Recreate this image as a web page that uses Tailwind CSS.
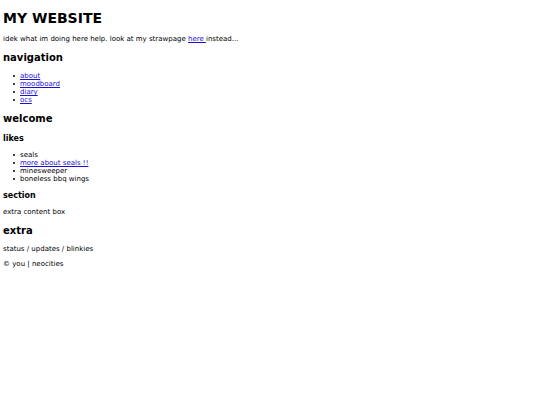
<!DOCTYPE html>
<html lang="en">
<head>
  <meta charset="UTF-8" />
  <meta name="viewport" content="width=device-width, initial-scale=1.0" />
  <title>MY WEBSITE</title>
  <script src="https://cdn.jsdelivr.net/npm/@tailwindcss/browser@4"></script>
</head>
<body class="bg-white text-black px-[3px] py-[9px] font-['DejaVu_Sans',sans-serif] text-[7px] leading-[8px]">
  <header>
    <h1 class="text-[14px] leading-[18px] font-bold">MY WEBSITE</h1>
    <p class="mt-2">idek what im doing here help. look at my strawpage <a href="#" class="text-[#1a10d8] underline">here </a>instead...</p>
  </header>

  <nav class="mt-2">
    <h2 class="text-[10px] leading-[14px] font-bold">navigation</h2>
    <ul class="mt-[7px] pl-[10px]">
      <li class="flex items-center gap-[5px] before:size-[2px] before:rounded-full before:bg-black"><a href="#" class="text-[#1a10d8] underline">about</a></li>
      <li class="flex items-center gap-[5px] before:size-[2px] before:rounded-full before:bg-black"><a href="#" class="text-[#1a10d8] underline">moodboard</a></li>
      <li class="flex items-center gap-[5px] before:size-[2px] before:rounded-full before:bg-black"><a href="#" class="text-[#1a10d8] underline">diary</a></li>
      <li class="flex items-center gap-[5px] before:size-[2px] before:rounded-full before:bg-black"><a href="#" class="text-[#1a10d8] underline">ocs</a></li>
    </ul>
  </nav>

  <main class="mt-2">
    <h2 class="text-[10px] leading-[14px] font-bold">welcome</h2>
    <section class="mt-2">
      <h3 class="text-[8px] leading-[10px] font-bold">likes</h3>
      <ul class="mt-[7px] pl-[10px]">
        <li class="flex items-center gap-[5px] before:size-[2px] before:rounded-full before:bg-black">seals</li>
        <li class="flex items-center gap-[5px] before:size-[2px] before:rounded-full before:bg-black"><a href="#" class="text-[#1a10d8] underline">more about seals !!</a></li>
        <li class="flex items-center gap-[5px] before:size-[2px] before:rounded-full before:bg-black">minesweeper</li>
        <li class="flex items-center gap-[5px] before:size-[2px] before:rounded-full before:bg-black">boneless bbq wings</li>
      </ul>
    </section>
    <section class="mt-2">
      <h3 class="text-[8px] leading-[10px] font-bold">section</h3>
      <p class="mt-[7px]">extra content box</p>
    </section>
  </main>

  <aside class="mt-2">
    <h2 class="text-[10px] leading-[14px] font-bold">extra</h2>
    <p class="mt-[7px]">status / updates / blinkies</p>
  </aside>

  <footer class="mt-[7px]">
    <p>© you | neocities</p>
  </footer>
</body>
</html>
